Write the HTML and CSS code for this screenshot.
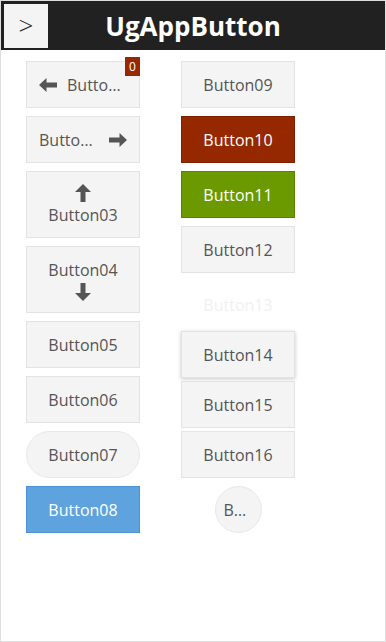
FILE: index.html
```html
<!DOCTYPE html>
<html lang="en">
<head>
    <meta charset="UTF-8">
    <meta name="viewport" content="width=device-width, initial-scale=1.0">
    <title>UgAppButton</title>
    <link rel="stylesheet" href="styles.css">
</head>
<body>
    <div class="app">
        <header class="topbar">
            <button class="menu-btn" type="button">&gt;</button>
            <h1>UgAppButton</h1>
        </header>

        <main class="columns">
            <div class="col">
                <button class="btn has-badge" type="button">
                    <svg class="ico" width="18" height="14" viewBox="0 0 18 14"><polygon points="0,7 7.5,0 7.5,4.5 18,4.5 18,9.5 7.5,9.5 7.5,14"/></svg>
                    <span class="label">Button01</span>
                    <span class="badge">0</span>
                </button>
                <button class="btn" type="button">
                    <span class="label">Button02</span>
                    <svg class="ico" width="18" height="14" viewBox="0 0 18 14"><polygon points="18,7 10.5,0 10.5,4.5 0,4.5 0,9.5 10.5,9.5 10.5,14"/></svg>
                </button>
                <button class="btn tall" type="button">
                    <svg class="ico" width="16" height="18" viewBox="0 0 16 18"><polygon points="8,0 16,8 10.5,8 10.5,18 5.5,18 5.5,8 0,8"/></svg>
                    <span>Button03</span>
                </button>
                <button class="btn tall" type="button">
                    <span>Button04</span>
                    <svg class="ico" width="16" height="18" viewBox="0 0 16 18"><polygon points="8,18 16,10 10.5,10 10.5,0 5.5,0 5.5,10 0,10"/></svg>
                </button>
                <button class="btn" type="button">Button05</button>
                <button class="btn" type="button">Button06</button>
                <button class="btn pill" type="button">Button07</button>
                <button class="btn blue" type="button">Button08</button>
            </div>

            <div class="col">
                <button class="btn" type="button">Button09</button>
                <button class="btn red" type="button">Button10</button>
                <button class="btn green" type="button">Button11</button>
                <button class="btn" type="button">Button12</button>
                <button class="btn ghost" type="button">Button13</button>
                <button class="btn raised tight" type="button">Button14</button>
                <button class="btn tight" type="button">Button15</button>
                <button class="btn tight" type="button">Button16</button>
                <button class="btn round" type="button"><span class="label">Button17</span></button>
            </div>
        </main>
    </div>
</body>
</html>
```

FILE: styles.css
```css
* {
    box-sizing: border-box;
}
body {
    margin: 0;
    font-family: "Open Sans", Arial, sans-serif;
    background-color: #fff;
}
.app {
    height: 642px;
    border: 1px solid #dedede;
}
.topbar {
    display: grid;
    grid-template-columns: 1fr auto 1fr;
    align-items: center;
    height: 49px;
    padding: 3px;
    background-color: #212121;
}
.menu-btn {
    width: 44px;
    height: 44px;
    border: none;
    background-color: #f4f4f4;
    color: #222;
    font-family: "Open Sans", sans-serif;
    font-size: 26px;
    font-weight: 300;
    line-height: 1;
    padding: 0 0 3px;
}
.topbar h1 {
    margin: 0;
    color: #fff;
    font-size: 26px;
    font-weight: bold;
}
.columns {
    display: flex;
    gap: 41px;
    padding: 11px 0 0 25px;
}
.col {
    display: flex;
    flex-direction: column;
    align-items: center;
    width: 114px;
    gap: 8px;
}
.btn {
    position: relative;
    display: flex;
    align-items: center;
    justify-content: center;
    gap: 10px;
    width: 114px;
    height: 47px;
    padding: 0 12px;
    border: 1px solid #e3e3e3;
    background-color: #f4f4f4;
    color: #555;
    font-family: "Open Sans", sans-serif;
    font-size: 16px;
}
.ico {
    flex: none;
    fill: #555;
}
.label {
    min-width: 0;
    overflow: hidden;
    white-space: nowrap;
    text-overflow: ellipsis;
}
.has-badge {
    justify-content: flex-start;
    padding-left: 12px;
}
.badge {
    position: absolute;
    top: -5px;
    right: -1px;
    width: 15px;
    height: 19px;
    background-color: #992800;
    color: #fff;
    font-size: 12px;
    line-height: 19px;
    text-align: center;
}
.tall {
    flex-direction: column;
    height: 67px;
    gap: 2px;
}
.pill {
    border-color: #e8e8e8;
    border-radius: 24px;
}
.blue {
    background-color: #5fa3de;
    border-color: #4b92d6;
    color: #fff;
}
.red {
    background-color: #962800;
    border-color: #7c2000;
    color: #fff;
}
.green {
    background-color: #6a9a00;
    border-color: #5a8300;
    color: #fff;
}
.ghost {
    background-color: transparent;
    border-color: transparent;
    color: #f1f1f1;
}
.raised {
    box-shadow: 0 1px 4px rgba(0, 0, 0, 0.22);
}
.tight {
    margin-top: -5px;
}
.round {
    width: 47px;
    padding: 0 8px;
    border-color: #e8e8e8;
    border-radius: 50%;
}
```
